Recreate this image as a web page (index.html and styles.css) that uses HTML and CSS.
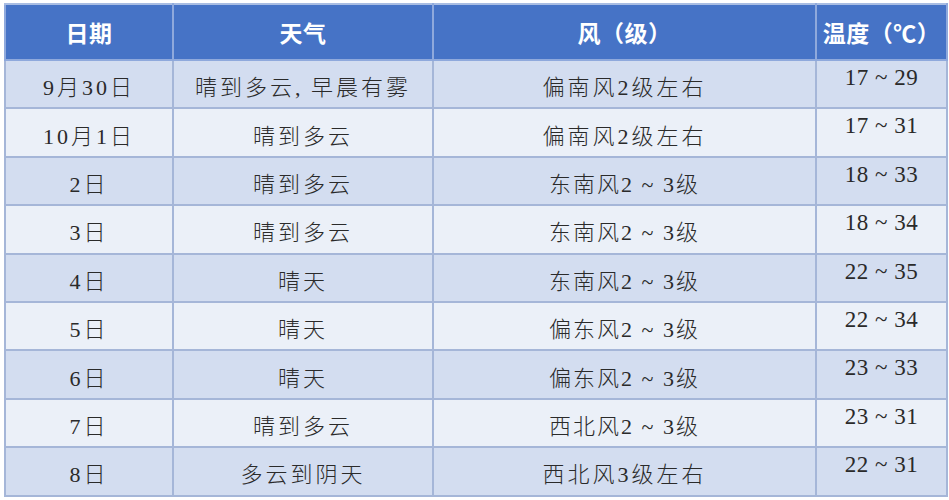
FILE: index.html
```html
<!DOCTYPE html>
<html lang="zh-CN">
<head>
<meta charset="utf-8">
<link rel="stylesheet" href="styles.css">
</head>
<body>
<table class="wx">
  <colgroup>
    <col class="c1"><col class="c2"><col class="c3"><col class="c4">
  </colgroup>
  <thead>
    <tr><th>日期</th><th>天气</th><th>风（级）</th><th>温度（℃）</th></tr>
  </thead>
  <tbody>
    <tr class="odd"><td>9月30日</td><td>晴到多云,&thinsp;早晨有雾</td><td>偏南风2级左右</td><td class="t">17 ~ 29</td></tr>
    <tr class="even"><td>10月1日</td><td>晴到多云</td><td>偏南风2级左右</td><td class="t">17 ~ 31</td></tr>
    <tr class="odd"><td>2日</td><td>晴到多云</td><td class="r">东南风2 ~ 3级</td><td class="t">18 ~ 33</td></tr>
    <tr class="even"><td>3日</td><td>晴到多云</td><td class="r">东南风2 ~ 3级</td><td class="t">18 ~ 34</td></tr>
    <tr class="odd"><td>4日</td><td>晴天</td><td class="r">东南风2 ~ 3级</td><td class="t">22 ~ 35</td></tr>
    <tr class="even"><td>5日</td><td>晴天</td><td class="r">偏东风2 ~ 3级</td><td class="t">22 ~ 34</td></tr>
    <tr class="odd"><td>6日</td><td>晴天</td><td class="r">偏东风2 ~ 3级</td><td class="t">23 ~ 33</td></tr>
    <tr class="even"><td>7日</td><td>晴到多云</td><td class="r">西北风2 ~ 3级</td><td class="t">23 ~ 31</td></tr>
    <tr class="odd"><td>8日</td><td>多云到阴天</td><td>西北风3级左右</td><td class="t">22 ~ 31</td></tr>
  </tbody>
</table>
</body>
</html>
```
FILE: styles.css
```css
html, body {
  margin: 0;
  padding: 0;
  background: #ffffff;
}
body {
  padding: 3px 0 0 4px;
}
.wx {
  border-collapse: collapse;
  table-layout: fixed;
  width: 942px;
  font-family: "Liberation Serif", "Noto Sans CJK SC", serif;
  color: #2a2a2a;
}
.c1 { width: 168px; }
.c2 { width: 260px; }
.c3 { width: 383px; }
.c4 { width: 131px; }
.wx th {
  height: 56px;
  box-sizing: border-box;
  background: #4673c6;
  color: #ffffff;
  font-family: "Noto Sans CJK SC", sans-serif;
  font-weight: 700;
  font-size: 23px;
  padding: 0;
  border: 2px solid #8fa9dc;
  border-top-color: #a9bde3;
  letter-spacing: 0.5px;
  text-align: center;
  vertical-align: middle;
}
.wx td {
  height: 48.4px;
  box-sizing: border-box;
  padding: 2px 0 0 0;
  border: 2px solid #a5b6d8;
  font-size: 22px;
  letter-spacing: 3px;
  text-align: center;
  vertical-align: middle;
  font-weight: 300;
}
.wx td.r {
  letter-spacing: 2px;
}
.wx td.t {
  vertical-align: top;
  padding-top: 4px;
  font-size: 23px;
  letter-spacing: 0.5px;
}
.odd td { background: #d3ddf0; }
.even td { background: #ebf0f8; }
```
